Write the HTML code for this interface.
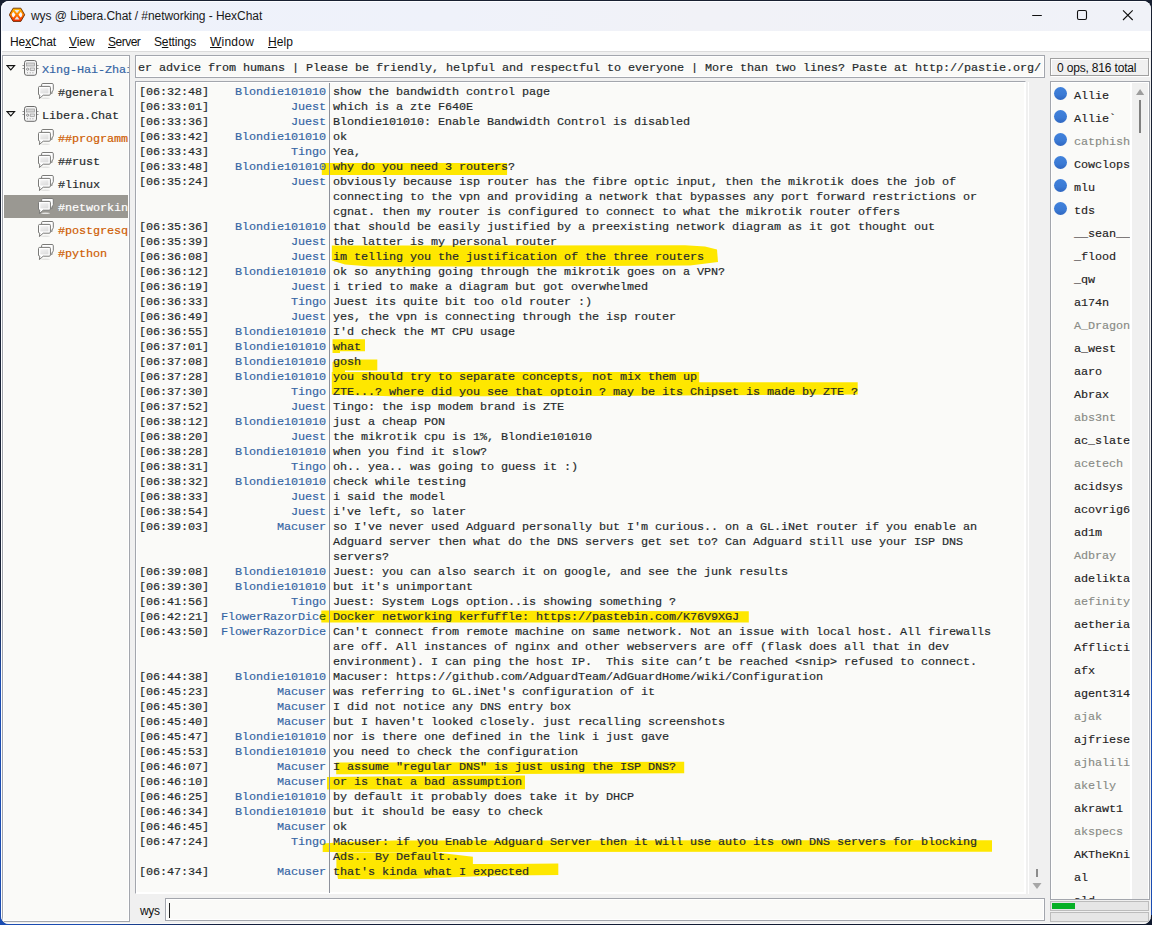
<!DOCTYPE html>
<html lang="en">
<head>
<meta charset="utf-8">
<title>wys @ Libera.Chat / #networking - HexChat</title>
<style>
html,body{margin:0;padding:0;}
body{width:1152px;height:925px;position:relative;overflow:hidden;
 background:linear-gradient(180deg,#182031 0px,#1a2236 600px,#1a4cb2 680px,#1a4cb2 100%);
 font-family:"Liberation Sans",sans-serif;}
#deskb{position:absolute;left:0;top:915px;width:1152px;height:10px;background:linear-gradient(90deg,#1a4cb2 0px,#1a4cb2 100px,#141f3c 220px,#10192e 100%);}
#win{position:absolute;left:1px;top:1px;width:1150px;height:923px;border-radius:8px;overflow:hidden;background:#f0f0f0;box-shadow:inset 0 -1px 0 0 #fafafa;}
.abs{position:absolute;}
#title{position:absolute;left:0;top:0;width:1150px;height:30px;background:linear-gradient(90deg,#eef2fb 0px,#eff2fa 450px,#f1f2f7 700px,#f0f2f8 1150px);}
#ttext{position:absolute;left:30px;top:7px;font-size:12px;line-height:16px;color:#1a1a1a;white-space:nowrap;letter-spacing:-0.06px;}
#menu{position:absolute;left:0;top:30px;width:1150px;height:20px;background:#fff;border-bottom:1px solid #dcdcdc;}
#menu span{position:absolute;top:3px;font-size:12px;line-height:16px;color:#111;white-space:nowrap;}
#menu u{text-decoration:underline;text-underline-offset:1px;}
.mono{font-family:"Liberation Mono","DejaVu Sans Mono",monospace;font-size:11.8px;letter-spacing:-0.08px;-webkit-text-stroke:0.18px;}
.frame{position:absolute;border:1px solid #a3a6ad;box-shadow:inset 0 0 0 1px #fff;background:#fafaf8;box-sizing:border-box;overflow:hidden;}
/* tree */
#tree{left:1px;top:54px;width:128px;height:867px;}
.tr{position:absolute;left:1px;width:124px;height:23px;}
.tr .tl{position:absolute;top:6px;line-height:15px;white-space:nowrap;color:#252a2b;font-family:"Liberation Mono","DejaVu Sans Mono",monospace;font-size:11.8px;letter-spacing:-0.08px;-webkit-text-stroke:0.18px;}
.tr.blue .tl{color:#3465a4;}
.tr.orange .tl{color:#ce5c00;}
.tr.sel{background:#9a9892;}
.tr.sel .tl{color:#fff;}
.tr .tri{position:absolute;left:1.700px;top:7.500px;}
.tr .ic.srv{position:absolute;left:18px;top:3px;}
.tr .ic.chan{position:absolute;left:34px;top:3px;}
/* topic */
#topic{left:134px;top:54px;width:910px;height:23px;background:#fafaf8;}
#topic span{position:absolute;left:2px;top:5px;line-height:15px;white-space:pre;color:#252a2b;}
/* chat */
#chat{left:134px;top:80px;width:891px;height:813px;border-color:#a3a6ad #fff #fff #a3a6ad;}
#chatwrap .r{position:absolute;left:0;height:15px;line-height:15px;white-space:pre;color:#252a2b;}
#chatwrap .ts{position:absolute;left:138px;top:0;}
#chatwrap .nk{position:absolute;right:-325px;top:0;color:#3465a4;}
#chatwrap .tx{position:absolute;left:332px;top:0;}
#sep{position:absolute;left:328px;top:82px;width:1px;height:810px;background:#8d919b;}
/* user list */
#ucount{position:absolute;left:1049px;top:57px;width:99px;height:18px;box-sizing:border-box;border:1px solid #a0a0a0;box-shadow:inset 1px 1px 0 0 #fff,1px 1px 0 0 #fff;background:#f0f0f0;}
#ucount span{position:absolute;left:6px;top:2px;font-size:12px;line-height:15px;color:#111;white-space:nowrap;letter-spacing:-0.17px;}
#ulist{left:1049px;top:80px;width:100px;height:819px;background:#fff;}
#uin{position:absolute;left:1px;top:1px;width:78px;height:816px;overflow:hidden;background:#fafaf8;}
#utrack{position:absolute;left:81px;top:1px;width:16px;height:816px;background:#f0f0f0;}
.u{position:absolute;left:0;width:80px;height:23px;}
.u span{position:absolute;left:22px;top:6px;line-height:15px;white-space:nowrap;color:#1e2223;font-family:"Liberation Mono","DejaVu Sans Mono",monospace;font-size:11.8px;letter-spacing:-0.08px;-webkit-text-stroke:0.15px;}
.u.aw span{color:#888a85;}
.dot{position:absolute;left:2px;top:4px;width:13px;height:13px;border-radius:50%;background:linear-gradient(180deg,#4182dc 0%,#3b7ad4 60%,#2f66c0 100%);}
</style>
</head>
<body>
<div id="deskb"></div>
<div id="win">
 <div id="title">
  <svg class="abs" style="left:8px;top:6px" width="18" height="16" viewBox="0 0 18 16">
   <defs><linearGradient id="hx" x1="0" y1="0" x2="0" y2="1"><stop offset="0" stop-color="#ffc000"/><stop offset="0.45" stop-color="#ff8200"/><stop offset="1" stop-color="#f02400"/></linearGradient></defs>
   <path d="M4.150 1.200h7.700l3.850 6.600l-3.850 6.600h-7.700l-3.850-6.600z" fill="url(#hx)" stroke="#6b2c00" stroke-width="0.9" stroke-linejoin="round"/>
   <path d="M5.500 3.100h5l-2.500 3.200z" fill="#e4e7ec"/>
   <path d="M5.500 12.500h5l-2.500-3.200z" fill="#e4e7ec"/>
   <path d="M2.700 7.800q0.300-2 1.800-2.800l2 2.800l-2 2.800q-1.500-0.800-1.800-2.800z" fill="#f7f8fb"/>
   <path d="M13.300 7.800q-0.300-2-1.800-2.800l-2 2.800l2 2.800q1.500-0.800 1.800-2.800z" fill="#f7f8fb"/>
  </svg>
  <div id="ttext">wys @ Libera.Chat / #networking - HexChat</div>
  <svg class="abs" style="left:1026px;top:4px" width="112" height="22" viewBox="0 0 112 22">
   <path d="M5.200 10.500h9.600" stroke="#111" stroke-width="1.100" fill="none"/>
   <rect x="50.500" y="5.500" width="9" height="9" rx="1.500" fill="none" stroke="#111" stroke-width="1.100"/>
   <path d="M96 5.300l9.700 9.700M105.700 5.300l-9.700 9.700" stroke="#111" stroke-width="1.100" fill="none"/>
  </svg>
 </div>
 <div id="menu">
  <span style="left:9px;letter-spacing:-0.11px">He<u>x</u>Chat</span>
  <span style="left:68px;letter-spacing:-0.08px"><u>V</u>iew</span>
  <span style="left:107px;letter-spacing:-0.5px"><u>S</u>erver</span>
  <span style="left:153px;letter-spacing:-0.15px">S<u>e</u>ttings</span>
  <span style="left:209px;letter-spacing:0.23px"><u>W</u>indow</span>
  <span style="left:267px;letter-spacing:0.06px"><u>H</u>elp</span>
 </div>

 <div id="tree" class="frame">
<div class="tr blue" style="top:1px"><svg class="tri" width="10" height="6" viewBox="0 0 10 6"><path d="M1 0.600h7.600l-3.800 4.300z" fill="none" stroke="#111" stroke-width="1.100"/></svg><svg class="ic srv" width="17" height="17" viewBox="0 0 17 17"><rect x="2.5" y="0.5" width="12" height="14.800" rx="2.2" fill="#f4f4f4" stroke="#5a5a5a" stroke-width="0.9"/><path d="M0.5 5.5h2M0.5 8.5h2M14.5 5.5h2M14.5 8.5h2" stroke="#777" stroke-width="0.8"/><rect x="4.6" y="3" width="7.8" height="3" fill="#d6d6d6" stroke="#9a9a9a" stroke-width="0.7"/><rect x="8.2" y="8" width="4.2" height="2.4" fill="#e4e4e4" stroke="#9a9a9a" stroke-width="0.7"/><circle cx="5.6" cy="9.2" r="1.1" fill="none" stroke="#777" stroke-width="0.8"/><path d="M5 12.800h1M7.700 12.800h1M10.400 12.800h1" stroke="#999" stroke-width="1"/></svg><span class="tl" style="left:38px">Xing-Hai-Zhai</span></div>
<div class="tr " style="top:24px"><svg class="ic chan" width="18" height="17" viewBox="0 0 18 17"><defs><linearGradient id="bg1" x1="0" y1="0" x2="0.600" y2="1"><stop offset="0" stop-color="#f2f2f2"/><stop offset="1" stop-color="#dedede"/></linearGradient></defs><ellipse cx="7.500" cy="15.200" rx="4.500" ry="0.800" fill="#e3e3e1"/><path d="M3.600 3.400v-1.700q0-1.200 1.200-1.200h9.300q1.200 0 1.200 1.200v5q0 1.200-1 1.300l-0.500 2.700l-1.700-2.100" fill="#fff" stroke="#7a7a78" stroke-width="1"/><path d="M6 2.800h7v4.500h-1z" fill="#e9e9e9"/><path d="M1.700 3.400h9.500q1.200 0 1.200 1.200v6.400q0 1.200-1.200 1.200h-6l-3.800 3.400l0.400-3.400q-1.300 0-1.300-1.200v-6.400q0-1.200 1.200-1.200z" fill="#fff" stroke="#7a7a78" stroke-width="1"/><rect x="2.300" y="5.200" width="8.200" height="5.200" fill="url(#bg1)"/></svg><span class="tl" style="left:54px">#general</span></div>
<div class="tr " style="top:47px"><svg class="tri" width="10" height="6" viewBox="0 0 10 6"><path d="M1 0.600h7.600l-3.800 4.300z" fill="none" stroke="#111" stroke-width="1.100"/></svg><svg class="ic srv" width="17" height="17" viewBox="0 0 17 17"><rect x="2.5" y="0.5" width="12" height="14.800" rx="2.2" fill="#f4f4f4" stroke="#5a5a5a" stroke-width="0.9"/><path d="M0.5 5.5h2M0.5 8.5h2M14.5 5.5h2M14.5 8.5h2" stroke="#777" stroke-width="0.8"/><rect x="4.6" y="3" width="7.8" height="3" fill="#d6d6d6" stroke="#9a9a9a" stroke-width="0.7"/><rect x="8.2" y="8" width="4.2" height="2.4" fill="#e4e4e4" stroke="#9a9a9a" stroke-width="0.7"/><circle cx="5.6" cy="9.2" r="1.1" fill="none" stroke="#777" stroke-width="0.8"/><path d="M5 12.800h1M7.700 12.800h1M10.400 12.800h1" stroke="#999" stroke-width="1"/></svg><span class="tl" style="left:38px">Libera.Chat</span></div>
<div class="tr orange" style="top:70px"><svg class="ic chan" width="18" height="17" viewBox="0 0 18 17"><defs><linearGradient id="bg3" x1="0" y1="0" x2="0.600" y2="1"><stop offset="0" stop-color="#f2f2f2"/><stop offset="1" stop-color="#dedede"/></linearGradient></defs><ellipse cx="7.500" cy="15.200" rx="4.500" ry="0.800" fill="#e3e3e1"/><path d="M3.600 3.400v-1.700q0-1.200 1.200-1.200h9.300q1.200 0 1.200 1.200v5q0 1.200-1 1.300l-0.500 2.700l-1.700-2.100" fill="#fff" stroke="#7a7a78" stroke-width="1"/><path d="M6 2.800h7v4.500h-1z" fill="#e9e9e9"/><path d="M1.700 3.400h9.500q1.200 0 1.200 1.200v6.400q0 1.200-1.200 1.200h-6l-3.800 3.400l0.400-3.400q-1.300 0-1.300-1.200v-6.400q0-1.200 1.200-1.200z" fill="#fff" stroke="#7a7a78" stroke-width="1"/><rect x="2.300" y="5.200" width="8.200" height="5.200" fill="url(#bg3)"/></svg><span class="tl" style="left:54px">##programm</span></div>
<div class="tr " style="top:93px"><svg class="ic chan" width="18" height="17" viewBox="0 0 18 17"><defs><linearGradient id="bg4" x1="0" y1="0" x2="0.600" y2="1"><stop offset="0" stop-color="#f2f2f2"/><stop offset="1" stop-color="#dedede"/></linearGradient></defs><ellipse cx="7.500" cy="15.200" rx="4.500" ry="0.800" fill="#e3e3e1"/><path d="M3.600 3.400v-1.700q0-1.200 1.200-1.200h9.300q1.200 0 1.200 1.200v5q0 1.200-1 1.300l-0.500 2.700l-1.700-2.100" fill="#fff" stroke="#7a7a78" stroke-width="1"/><path d="M6 2.800h7v4.500h-1z" fill="#e9e9e9"/><path d="M1.700 3.400h9.500q1.200 0 1.200 1.200v6.400q0 1.200-1.200 1.200h-6l-3.800 3.400l0.400-3.400q-1.300 0-1.300-1.200v-6.400q0-1.200 1.200-1.200z" fill="#fff" stroke="#7a7a78" stroke-width="1"/><rect x="2.300" y="5.200" width="8.200" height="5.200" fill="url(#bg4)"/></svg><span class="tl" style="left:54px">##rust</span></div>
<div class="tr " style="top:116px"><svg class="ic chan" width="18" height="17" viewBox="0 0 18 17"><defs><linearGradient id="bg5" x1="0" y1="0" x2="0.600" y2="1"><stop offset="0" stop-color="#f2f2f2"/><stop offset="1" stop-color="#dedede"/></linearGradient></defs><ellipse cx="7.500" cy="15.200" rx="4.500" ry="0.800" fill="#e3e3e1"/><path d="M3.600 3.400v-1.700q0-1.200 1.200-1.200h9.300q1.200 0 1.200 1.200v5q0 1.200-1 1.300l-0.500 2.700l-1.700-2.100" fill="#fff" stroke="#7a7a78" stroke-width="1"/><path d="M6 2.800h7v4.500h-1z" fill="#e9e9e9"/><path d="M1.700 3.400h9.500q1.200 0 1.200 1.200v6.400q0 1.200-1.200 1.200h-6l-3.800 3.400l0.400-3.400q-1.300 0-1.300-1.200v-6.400q0-1.200 1.200-1.200z" fill="#fff" stroke="#7a7a78" stroke-width="1"/><rect x="2.300" y="5.200" width="8.200" height="5.200" fill="url(#bg5)"/></svg><span class="tl" style="left:54px">#linux</span></div>
<div class="tr sel" style="top:139px"><svg class="ic chan" width="18" height="17" viewBox="0 0 18 17"><defs><linearGradient id="bg6" x1="0" y1="0" x2="0.600" y2="1"><stop offset="0" stop-color="#f2f2f2"/><stop offset="1" stop-color="#dedede"/></linearGradient></defs><ellipse cx="7.500" cy="15.200" rx="4.500" ry="0.800" fill="#e3e3e1"/><path d="M3.600 3.400v-1.700q0-1.200 1.200-1.200h9.300q1.200 0 1.200 1.200v5q0 1.200-1 1.300l-0.500 2.700l-1.700-2.100" fill="#fff" stroke="#7a7a78" stroke-width="1"/><path d="M6 2.800h7v4.500h-1z" fill="#e9e9e9"/><path d="M1.700 3.400h9.500q1.200 0 1.200 1.200v6.400q0 1.200-1.200 1.200h-6l-3.800 3.400l0.400-3.400q-1.300 0-1.300-1.200v-6.400q0-1.200 1.200-1.200z" fill="#fff" stroke="#7a7a78" stroke-width="1"/><rect x="2.300" y="5.200" width="8.200" height="5.200" fill="url(#bg6)"/></svg><span class="tl" style="left:54px">#networkin</span></div>
<div class="tr orange" style="top:162px"><svg class="ic chan" width="18" height="17" viewBox="0 0 18 17"><defs><linearGradient id="bg7" x1="0" y1="0" x2="0.600" y2="1"><stop offset="0" stop-color="#f2f2f2"/><stop offset="1" stop-color="#dedede"/></linearGradient></defs><ellipse cx="7.500" cy="15.200" rx="4.500" ry="0.800" fill="#e3e3e1"/><path d="M3.600 3.400v-1.700q0-1.200 1.200-1.200h9.300q1.200 0 1.200 1.200v5q0 1.200-1 1.300l-0.500 2.700l-1.700-2.100" fill="#fff" stroke="#7a7a78" stroke-width="1"/><path d="M6 2.800h7v4.500h-1z" fill="#e9e9e9"/><path d="M1.700 3.400h9.500q1.200 0 1.200 1.200v6.400q0 1.200-1.200 1.200h-6l-3.800 3.400l0.400-3.400q-1.300 0-1.300-1.200v-6.400q0-1.200 1.200-1.200z" fill="#fff" stroke="#7a7a78" stroke-width="1"/><rect x="2.300" y="5.200" width="8.200" height="5.200" fill="url(#bg7)"/></svg><span class="tl" style="left:54px">#postgresq</span></div>
<div class="tr orange" style="top:185px"><svg class="ic chan" width="18" height="17" viewBox="0 0 18 17"><defs><linearGradient id="bg8" x1="0" y1="0" x2="0.600" y2="1"><stop offset="0" stop-color="#f2f2f2"/><stop offset="1" stop-color="#dedede"/></linearGradient></defs><ellipse cx="7.500" cy="15.200" rx="4.500" ry="0.800" fill="#e3e3e1"/><path d="M3.600 3.400v-1.700q0-1.200 1.200-1.200h9.300q1.200 0 1.200 1.200v5q0 1.200-1 1.300l-0.500 2.700l-1.700-2.100" fill="#fff" stroke="#7a7a78" stroke-width="1"/><path d="M6 2.800h7v4.500h-1z" fill="#e9e9e9"/><path d="M1.700 3.400h9.500q1.200 0 1.200 1.200v6.400q0 1.200-1.200 1.200h-6l-3.800 3.400l0.400-3.400q-1.300 0-1.300-1.200v-6.400q0-1.200 1.200-1.200z" fill="#fff" stroke="#7a7a78" stroke-width="1"/><rect x="2.300" y="5.200" width="8.200" height="5.200" fill="url(#bg8)"/></svg><span class="tl" style="left:54px">#python</span></div>
 </div>

 <div id="topic" class="frame mono"><span>er advice from humans | Please be friendly, helpful and respectful to everyone | More than two lines? Paste at http://pastie.org/</span></div>

 <div id="chat" class="frame"></div>
 <div class="abs" style="left:1027px;top:81px;width:1px;height:812px;background:#fff"></div>
 <svg class="abs" style="left:0;top:0;pointer-events:none" width="1150" height="922" viewBox="1 1 1150 922">
  <g fill="#fee700">
   <polygon points="321.800,162.900 507.100,162.900 507.100,175 321.800,175"/>
   <polygon points="331.800,245.500 685,245.300 705,246.500 717,249.500 718,262 690,265.500 500,266.500 370,266.500 345,264.500 331.800,260.500"/>
   <polygon points="332.500,339.200 365,339.200 365,351.200 340,351.200 340,353 332.500,353"/>
   <polygon points="332.500,362 340,359.500 377.300,359.500 377.300,370.400 345,370.400 345,372 332.500,372"/>
   <polygon points="331.800,372 699.200,372 699.200,382.300 857.700,382.300 857.700,394.500 600,396 400,396.500 331.800,394.500"/>
   <polygon points="321.300,610.400 748.800,611.200 748.800,622.400 321.300,622.400"/>
   <polygon points="336.200,762.500 684.200,761.800 684.200,773.200 500,774 336.200,774.300"/>
   <polygon points="327,777 400,776.300 525,775.500 525,789.200 327,789.600"/>
   <polygon points="322.700,843.500 345,842 395,840.500 992,840.200 992,851.700 322.700,852"/>
   <polygon points="336.400,852.500 434.700,852.300 472.900,856.700 472.900,864.100 558.300,863.600 558.300,875 500,875.500 445,877.600 400,879.200 338,879 336.400,870"/>
  </g>

 </svg>
 <div id="sep"></div>
 <div id="chatwrap" class="mono" style="position:absolute;left:0;top:0;width:1023px;height:891px;overflow:hidden">
<div class="r" style="top:84px"><span class="ts">[06:32:48]</span><span class="nk">Blondie101010</span><span class="tx">show the bandwidth control page</span></div>
<div class="r" style="top:99px"><span class="ts">[06:33:01]</span><span class="nk">Juest</span><span class="tx">which is a zte F640E</span></div>
<div class="r" style="top:114px"><span class="ts">[06:33:36]</span><span class="nk">Juest</span><span class="tx">Blondie101010: Enable Bandwidth Control is disabled</span></div>
<div class="r" style="top:129px"><span class="ts">[06:33:42]</span><span class="nk">Blondie101010</span><span class="tx">ok</span></div>
<div class="r" style="top:144px"><span class="ts">[06:33:43]</span><span class="nk">Tingo</span><span class="tx">Yea,</span></div>
<div class="r" style="top:159px"><span class="ts">[06:33:48]</span><span class="nk">Blondie101010</span><span class="tx">why do you need 3 routers?</span></div>
<div class="r" style="top:174px"><span class="ts">[06:35:24]</span><span class="nk">Juest</span><span class="tx">obviously because isp router has the fibre optic input, then the mikrotik does the job of</span></div>
<div class="r" style="top:189px"><span class="tx">connecting to the vpn and providing a network that bypasses any port forward restrictions or</span></div>
<div class="r" style="top:204px"><span class="tx">cgnat. then my router is configured to connect to what the mikrotik router offers</span></div>
<div class="r" style="top:219px"><span class="ts">[06:35:36]</span><span class="nk">Blondie101010</span><span class="tx">that should be easily justified by a preexisting network diagram as it got thought out</span></div>
<div class="r" style="top:234px"><span class="ts">[06:35:39]</span><span class="nk">Juest</span><span class="tx">the latter is my personal router</span></div>
<div class="r" style="top:249px"><span class="ts">[06:36:08]</span><span class="nk">Juest</span><span class="tx">im telling you the justification of the three routers</span></div>
<div class="r" style="top:264px"><span class="ts">[06:36:12]</span><span class="nk">Blondie101010</span><span class="tx">ok so anything going through the mikrotik goes on a VPN?</span></div>
<div class="r" style="top:279px"><span class="ts">[06:36:19]</span><span class="nk">Juest</span><span class="tx">i tried to make a diagram but got overwhelmed</span></div>
<div class="r" style="top:294px"><span class="ts">[06:36:33]</span><span class="nk">Tingo</span><span class="tx">Juest its quite bit too old router :)</span></div>
<div class="r" style="top:309px"><span class="ts">[06:36:49]</span><span class="nk">Juest</span><span class="tx">yes, the vpn is connecting through the isp router</span></div>
<div class="r" style="top:324px"><span class="ts">[06:36:55]</span><span class="nk">Blondie101010</span><span class="tx">I'd check the MT CPU usage</span></div>
<div class="r" style="top:339px"><span class="ts">[06:37:01]</span><span class="nk">Blondie101010</span><span class="tx">what</span></div>
<div class="r" style="top:354px"><span class="ts">[06:37:08]</span><span class="nk">Blondie101010</span><span class="tx">gosh</span></div>
<div class="r" style="top:369px"><span class="ts">[06:37:28]</span><span class="nk">Blondie101010</span><span class="tx">you should try to separate concepts, not mix them up</span></div>
<div class="r" style="top:384px"><span class="ts">[06:37:30]</span><span class="nk">Tingo</span><span class="tx">ZTE...? where did you see that optoin ? may be its Chipset is made by ZTE ?</span></div>
<div class="r" style="top:399px"><span class="ts">[06:37:52]</span><span class="nk">Juest</span><span class="tx">Tingo: the isp modem brand is ZTE</span></div>
<div class="r" style="top:414px"><span class="ts">[06:38:12]</span><span class="nk">Blondie101010</span><span class="tx">just a cheap PON</span></div>
<div class="r" style="top:429px"><span class="ts">[06:38:20]</span><span class="nk">Juest</span><span class="tx">the mikrotik cpu is 1%, Blondie101010</span></div>
<div class="r" style="top:444px"><span class="ts">[06:38:28]</span><span class="nk">Blondie101010</span><span class="tx">when you find it slow?</span></div>
<div class="r" style="top:459px"><span class="ts">[06:38:31]</span><span class="nk">Tingo</span><span class="tx">oh.. yea.. was going to guess it :)</span></div>
<div class="r" style="top:474px"><span class="ts">[06:38:32]</span><span class="nk">Blondie101010</span><span class="tx">check while testing</span></div>
<div class="r" style="top:489px"><span class="ts">[06:38:33]</span><span class="nk">Juest</span><span class="tx">i said the model</span></div>
<div class="r" style="top:504px"><span class="ts">[06:38:54]</span><span class="nk">Juest</span><span class="tx">i've left, so later</span></div>
<div class="r" style="top:519px"><span class="ts">[06:39:03]</span><span class="nk">Macuser</span><span class="tx">so I've never used Adguard personally but I'm curious.. on a GL.iNet router if you enable an</span></div>
<div class="r" style="top:534px"><span class="tx">Adguard server then what do the DNS servers get set to? Can Adguard still use your ISP DNS</span></div>
<div class="r" style="top:549px"><span class="tx">servers?</span></div>
<div class="r" style="top:564px"><span class="ts">[06:39:08]</span><span class="nk">Blondie101010</span><span class="tx">Juest: you can also search it on google, and see the junk results</span></div>
<div class="r" style="top:579px"><span class="ts">[06:39:30]</span><span class="nk">Blondie101010</span><span class="tx">but it's unimportant</span></div>
<div class="r" style="top:594px"><span class="ts">[06:41:56]</span><span class="nk">Tingo</span><span class="tx">Juest: System Logs option..is showing something ?</span></div>
<div class="r" style="top:609px"><span class="ts">[06:42:21]</span><span class="nk">FlowerRazorDic<span style="color:#345b00">e</span></span><span class="tx">Docker networking kerfuffle: https://pastebin.com/K76V9XGJ</span></div>
<div class="r" style="top:624px"><span class="ts">[06:43:50]</span><span class="nk">FlowerRazorDice</span><span class="tx">Can't connect from remote machine on same network. Not an issue with local host. All firewalls</span></div>
<div class="r" style="top:639px"><span class="tx">are off. All instances of nginx and other webservers are off (flask does all that in dev</span></div>
<div class="r" style="top:654px"><span class="tx">environment). I can ping the host IP.  This site can’t be reached &lt;snip&gt; refused to connect.</span></div>
<div class="r" style="top:669px"><span class="ts">[06:44:38]</span><span class="nk">Blondie101010</span><span class="tx">Macuser: https://github.com/AdguardTeam/AdGuardHome/wiki/Configuration</span></div>
<div class="r" style="top:684px"><span class="ts">[06:45:23]</span><span class="nk">Macuser</span><span class="tx">was referring to GL.iNet's configuration of it</span></div>
<div class="r" style="top:699px"><span class="ts">[06:45:30]</span><span class="nk">Macuser</span><span class="tx">I did not notice any DNS entry box</span></div>
<div class="r" style="top:714px"><span class="ts">[06:45:40]</span><span class="nk">Macuser</span><span class="tx">but I haven't looked closely. just recalling screenshots</span></div>
<div class="r" style="top:729px"><span class="ts">[06:45:47]</span><span class="nk">Blondie101010</span><span class="tx">nor is there one defined in the link i just gave</span></div>
<div class="r" style="top:744px"><span class="ts">[06:45:53]</span><span class="nk">Blondie101010</span><span class="tx">you need to check the configuration</span></div>
<div class="r" style="top:759px"><span class="ts">[06:46:07]</span><span class="nk">Macuser</span><span class="tx">I assume "regular DNS" is just using the ISP DNS?</span></div>
<div class="r" style="top:774px"><span class="ts">[06:46:10]</span><span class="nk">Macuser</span><span class="tx">or is that a bad assumption</span></div>
<div class="r" style="top:789px"><span class="ts">[06:46:25]</span><span class="nk">Blondie101010</span><span class="tx">by default it probably does take it by DHCP</span></div>
<div class="r" style="top:804px"><span class="ts">[06:46:34]</span><span class="nk">Blondie101010</span><span class="tx">but it should be easy to check</span></div>
<div class="r" style="top:819px"><span class="ts">[06:46:45]</span><span class="nk">Macuser</span><span class="tx">ok</span></div>
<div class="r" style="top:834px"><span class="ts">[06:47:24]</span><span class="nk">Tingo</span><span class="tx">Macuser: if you Enable Adguard Server then it will use auto its own DNS servers for blocking</span></div>
<div class="r" style="top:849px"><span class="tx">Ads.. By Default..</span></div>
<div class="r" style="top:864px"><span class="ts">[06:47:34]</span><span class="nk">Macuser</span><span class="tx">that's kinda what I expected</span></div>
 </div>
 <!-- chat scrollbar -->
 <div class="abs" style="left:1035px;top:868px;width:2px;height:8px;background:#8c8c8c"></div>
 <svg class="abs" style="left:1031px;top:881px" width="10" height="8" viewBox="0 0 10 8"><path d="M0.500 1h9l-4.500 6z" fill="#a6a6a6"/></svg>

 <div id="ucount"><span>0 ops, 816 total</span></div>
 <div id="ulist" class="frame">
  <div id="uin">
<div class="u" style="top:0px"><i class="dot"></i><span>Allie</span></div>
<div class="u" style="top:23px"><i class="dot"></i><span>Allie`</span></div>
<div class="u aw" style="top:46px"><i class="dot"></i><span>catphish</span></div>
<div class="u" style="top:69px"><i class="dot"></i><span>Cowclops</span></div>
<div class="u" style="top:92px"><i class="dot"></i><span>mlu</span></div>
<div class="u" style="top:115px"><i class="dot"></i><span>tds</span></div>
<div class="u" style="top:138px"><span>__sean__</span></div>
<div class="u" style="top:161px"><span>_flood</span></div>
<div class="u" style="top:184px"><span>_qw</span></div>
<div class="u" style="top:207px"><span>a174n</span></div>
<div class="u aw" style="top:230px"><span>A_Dragon</span></div>
<div class="u" style="top:253px"><span>a_west</span></div>
<div class="u" style="top:276px"><span>aaro</span></div>
<div class="u" style="top:299px"><span>Abrax</span></div>
<div class="u aw" style="top:322px"><span>abs3nt</span></div>
<div class="u" style="top:345px"><span>ac_slate</span></div>
<div class="u aw" style="top:368px"><span>acetech</span></div>
<div class="u" style="top:391px"><span>acidsys</span></div>
<div class="u" style="top:414px"><span>acovrig6</span></div>
<div class="u" style="top:437px"><span>ad1m</span></div>
<div class="u aw" style="top:460px"><span>Adbray</span></div>
<div class="u" style="top:483px"><span>adelikta</span></div>
<div class="u aw" style="top:506px"><span>aefinity</span></div>
<div class="u" style="top:529px"><span>aetheria</span></div>
<div class="u" style="top:552px"><span>Afflicti</span></div>
<div class="u" style="top:575px"><span>afx</span></div>
<div class="u" style="top:598px"><span>agent314</span></div>
<div class="u aw" style="top:621px"><span>ajak</span></div>
<div class="u" style="top:644px"><span>ajfriese</span></div>
<div class="u aw" style="top:667px"><span>ajhalili</span></div>
<div class="u aw" style="top:690px"><span>akelly</span></div>
<div class="u" style="top:713px"><span>akrawt1</span></div>
<div class="u aw" style="top:736px"><span>akspecs</span></div>
<div class="u" style="top:759px"><span>AKTheKni</span></div>
<div class="u" style="top:782px"><span>al</span></div>
<div class="u" style="top:805px"><span>ald</span></div>
  </div>
  <div id="utrack">
   <svg class="abs" style="left:4px;top:6px" width="9" height="6" viewBox="0 0 9 6"><path d="M0 6h8.200l-4.100-6z" fill="#9d9d9d"/></svg>
   <div class="abs" style="left:7px;top:17px;width:2.200px;height:33px;background:#808080"></div>
  </div>
 </div>

 <!-- input -->
 <div class="abs" style="left:139px;top:903px;font-size:12px;line-height:15px;color:#111;letter-spacing:-0.3px">wys</div>
 <div class="abs" style="left:164px;top:897px;width:880px;height:23px;box-sizing:border-box;border:1px solid #a3a6ad;background:#fafaf8;box-shadow:inset 0 0 0 1px #fff"></div>
 <div class="abs" style="left:168px;top:902px;width:1px;height:14.500px;background:#222"></div>

 <!-- progress bars -->
 <div class="abs" style="left:1049px;top:900px;width:99px;height:10px;box-sizing:border-box;border:1px solid #bcbcbc;background:#e6e6e6"></div>
 <div class="abs" style="left:1051px;top:902px;width:23px;height:6px;background:#06b025"></div>
 <div class="abs" style="left:1049px;top:911px;width:99px;height:10px;box-sizing:border-box;border:1px solid #bcbcbc;background:#e6e6e6"></div>
 <div class="abs" style="left:0;top:0;width:1150px;height:923px;border-radius:8px;box-shadow:inset 1px 1px 0 0 #fcfdff;pointer-events:none"></div>
</div>
</body>
</html>
